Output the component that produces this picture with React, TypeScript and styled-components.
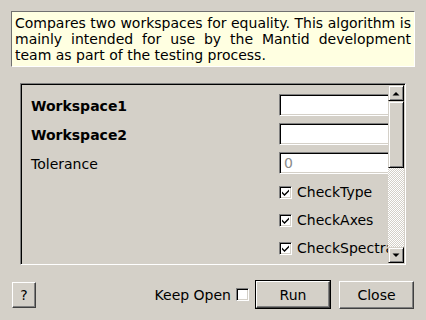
import React from "react";
import styled, { createGlobalStyle } from "styled-components";

const Global = createGlobalStyle`
  html, body { margin: 0; padding: 0; background: #d4d0c8; }
  body { font-family: "DejaVu Sans", Verdana, sans-serif; font-size: 14px; color: #000; }
`;

const Page = styled.div`
  width: 426px;
  height: 320px;
  box-sizing: border-box;
  display: flex;
  flex-direction: column;
  background: #d4d0c8;
  overflow: hidden;
`;

const Description = styled.div`
  margin: 11px 11px 0 11px;
  height: 56px;
  box-sizing: border-box;
  background: #ffffe1;
  border-top: 1px solid #707070;
  border-left: 1px solid #707070;
  border-right: 1px solid #ffffff;
  border-bottom: 1px solid #ffffff;
  padding: 3px 3px 0 3px;
  font-size: 14px;
  line-height: 16px;
  text-align: justify;
`;

const Frame = styled.div`
  margin: 16px 20px 0 20px;
  height: 182px;
  box-sizing: border-box;
  border-top: 1px solid #808080;
  border-left: 1px solid #808080;
  border-right: 1px solid #ffffff;
  border-bottom: 1px solid #ffffff;
  box-shadow: inset 1px 1px 0 #000000, inset -1px -1px 0 #d4d0c8;
  padding: 1px;
  display: flex;
`;

const Viewport = styled.div`
  flex: 1;
  overflow: hidden;
  padding: 9px 0 0 9px;
  box-sizing: border-box;
`;

const Grid = styled.div`
  display: grid;
  grid-template-columns: 248px 130px;
  grid-auto-rows: 22px;
  row-gap: 7px;
  width: 378px;
`;

const CheckGrid = styled(Grid)`
  margin-top: 7px;
  row-gap: 6px;
`;

const Label = styled.div<{ $bold?: boolean }>`
  display: flex;
  align-items: center;
  padding-top: 1px;
  font-weight: ${(p) => (p.$bold ? "bold" : "normal")};
  white-space: nowrap;
`;

const Input = styled.div`
  height: 22px;
  box-sizing: border-box;
  background: #fff;
  border-top: 1px solid #808080;
  border-left: 1px solid #808080;
  border-right: 1px solid #ffffff;
  border-bottom: 1px solid #ffffff;
  box-shadow: inset 1px 1px 0 #000000, inset -1px -1px 0 #d4d0c8;
  padding: 0 4px;
  display: flex;
  align-items: center;
  color: #8a8a8a;
`;

const CheckRow = styled.div`
  display: flex;
  align-items: center;
  gap: 5px;
  white-space: nowrap;
`;

const Box = styled.div`
  width: 13px;
  height: 13px;
  box-sizing: border-box;
  background: #fff;
  border-top: 1px solid #808080;
  border-left: 1px solid #808080;
  border-right: 1px solid #ffffff;
  border-bottom: 1px solid #ffffff;
  box-shadow: inset 1px 1px 0 #000000, inset -1px -1px 0 #d4d0c8;
  display: flex;
  align-items: center;
  justify-content: center;
  flex: none;
`;

const ScrollBar = styled.div`
  width: 16px;
  display: flex;
  flex-direction: column;
  flex: none;
`;

const ArrowBtn = styled.div`
  width: 16px;
  height: 16px;
  box-sizing: border-box;
  background: #d4d0c8;
  border-top: 1px solid #d4d0c8;
  border-left: 1px solid #d4d0c8;
  border-right: 1px solid #000;
  border-bottom: 1px solid #000;
  box-shadow: inset 1px 1px 0 #fff, inset -1px -1px 0 #808080;
  display: flex;
  align-items: center;
  justify-content: center;
  flex: none;
`;

const Thumb = styled(ArrowBtn)`
  height: 67px;
`;

const Trough = styled.div`
  flex: 1;
  background-color: #ffffff;
  background-image: repeating-conic-gradient(#d4d0c8 0 25%, #ffffff 0 50%);
  background-size: 2px 2px;
`;

const Footer = styled.div`
  margin-top: 15px;
  padding: 0 12px;
  display: flex;
  align-items: center;
`;

const RaisedButton = styled.div<{ $w: number; $h: number }>`
  width: ${(p) => p.$w}px;
  height: ${(p) => p.$h}px;
  box-sizing: border-box;
  background: #d4d0c8;
  border-top: 1px solid #ffffff;
  border-left: 1px solid #ffffff;
  border-right: 1px solid #404040;
  border-bottom: 1px solid #404040;
  box-shadow: inset -1px -1px 0 #808080;
  display: flex;
  align-items: center;
  justify-content: center;
  font-size: 14px;
  flex: none;
`;

const DefaultWrap = styled.div`
  border: 1px solid #000;
  flex: none;
  display: flex;
`;

const Spacer = styled.div`
  flex: 1;
`;

const Gap = styled.div`
  width: 8px;
  flex: none;
`;

const KeepOpen = styled.div`
  display: flex;
  align-items: center;
  gap: 5px;
  margin-right: 6px;
`;

const Check = () => (
  <svg width="9" height="9" viewBox="0 0 9 9">
    <path d="M1 3.5 L3.5 6 L8 1.5 L8 3.5 L3.5 8 L1 5.5 Z" fill="#000" />
  </svg>
);

const Up = () => (
  <svg width="8" height="5" viewBox="0 0 8 5">
    <path d="M0.5 4.5 L4 1 L7.5 4.5 Z" fill="#000" />
  </svg>
);

const Down = () => (
  <svg width="8" height="5" viewBox="0 0 8 5">
    <path d="M0.5 0.5 L7.5 0.5 L4 4 Z" fill="#000" />
  </svg>
);

export default function App() {
  return (
    <>
      <Global />
      <Page>
        <Description>
          Compares two workspaces for equality. This algorithm is mainly intended for use by the Mantid development team as part of the testing process.
        </Description>
        <Frame>
          <Viewport>
            <Grid>
              <Label $bold>Workspace1</Label>
              <Input />
              <Label $bold>Workspace2</Label>
              <Input />
              <Label>Tolerance</Label>
              <Input>0</Input>
            </Grid>
            <CheckGrid>
              <div />
              <CheckRow>
                <Box><Check /></Box>CheckType
              </CheckRow>
              <div />
              <CheckRow>
                <Box><Check /></Box>CheckAxes
              </CheckRow>
              <div />
              <CheckRow>
                <Box><Check /></Box>CheckSpectraMap
              </CheckRow>
            </CheckGrid>
          </Viewport>
          <ScrollBar>
            <ArrowBtn><Up /></ArrowBtn>
            <Thumb />
            <Trough />
            <ArrowBtn><Down /></ArrowBtn>
          </ScrollBar>
        </Frame>
        <Footer>
          <RaisedButton $w={24} $h={26}>?</RaisedButton>
          <Spacer />
          <KeepOpen>
            Keep Open
            <Box />
          </KeepOpen>
          <DefaultWrap>
            <RaisedButton $w={74} $h={27}>Run</RaisedButton>
          </DefaultWrap>
          <Gap />
          <RaisedButton $w={75} $h={28}>Close</RaisedButton>
        </Footer>
      </Page>
    </>
  );
}
